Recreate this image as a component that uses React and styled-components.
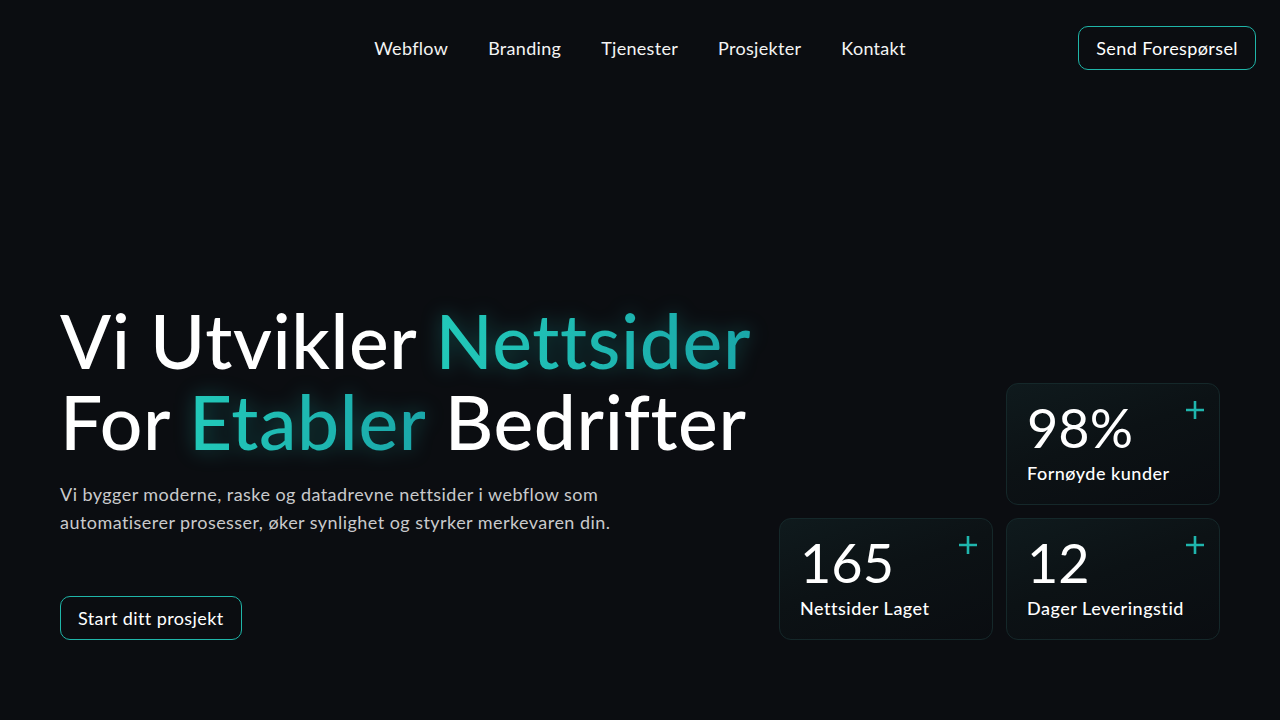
import React from "react";
import styled, { createGlobalStyle } from "styled-components";

const Global = createGlobalStyle`
  html, body { margin: 0; padding: 0; background: #0b0d11; }
  body { font-family: Lato, "Noto Sans", sans-serif; color: #fff; }
  * { box-sizing: border-box; }
`;

const Page = styled.div`
  width: 1280px;
  height: 720px;
  overflow: hidden;
  background: #0b0d11;
  display: flex;
  flex-direction: column;
`;

const Header = styled.header`
  height: 97px;
  padding: 26px 24px 0 24px;
  display: grid;
  grid-template-columns: 1fr auto 1fr;
  align-items: start;
`;

const Nav = styled.nav`
  display: flex;
  gap: 40px;
  height: 44px;
  align-items: center;
`;

const NavLink = styled.a`
  color: #f4f4f4;
  font-size: 18px;
  text-decoration: none;
  letter-spacing: 0.3px;
`;

const OutlineButton = styled.a`
  display: inline-flex;
  align-items: center;
  justify-content: center;
  height: ${(p) => p.$h || 44}px;
  padding: 0 ${(p) => p.$px || 17}px;
  border: 1px solid #1fb5a8;
  border-radius: 10px;
  color: #fff;
  font-size: 18px;
  letter-spacing: 0.4px;
  text-decoration: none;
  background: #0b0d11;
  justify-self: end;
`;

const Hero = styled.section`
  flex: 1;
  display: flex;
  justify-content: space-between;
  align-items: flex-end;
  padding: 0 60px 80px 60px;
`;

const Left = styled.div`
  display: flex;
  flex-direction: column;
  align-items: flex-start;
`;

const Title = styled.h1`
  margin: 0;
  font-size: 75px;
  font-weight: 500;
  line-height: 81px;
  letter-spacing: 0.6px;
  color: #fff;
`;

const Accent = styled.span`
  background: linear-gradient(90deg, #22c9b9 0%, #1aa7a9 100%);
  -webkit-background-clip: text;
  background-clip: text;
  color: transparent;
  filter: drop-shadow(0 0 10px rgba(30, 190, 180, 0.35));
`;

const Lead = styled.p`
  margin: 18px 0 0;
  font-size: 18px;
  line-height: 28px;
  letter-spacing: 0.45px;
  color: #c9cacc;
  max-width: 600px;
`;

const CtaWrap = styled.div`
  margin-top: 60px;
`;

const Stats = styled.div`
  display: grid;
  grid-template-columns: 214px 214px;
  grid-template-rows: 122px 122px;
  gap: 13px;
`;

const Card = styled.div`
  position: relative;
  grid-column: ${(p) => p.$col};
  grid-row: ${(p) => p.$row};
  border: 1px solid #15282a;
  border-radius: 12px;
  background: linear-gradient(160deg, #0f1a1d 0%, #0c1215 45%, #0a0d11 100%);
  padding: 12px 20px 0 20px;
  display: flex;
  flex-direction: column;
`;

const Num = styled.div`
  font-size: 54px;
  line-height: 64px;
  font-weight: 400;
  color: #fff;
`;

const Label = styled.div`
  font-size: 18px;
  font-weight: 500;
  letter-spacing: 0.5px;
  color: #fff;
  margin-top: 2px;
`;

const Plus = styled.svg`
  position: absolute;
  top: 16px;
  right: 14px;
  width: 20px;
  height: 20px;
`;

const PlusIcon = () => (
  <Plus viewBox="0 0 20 20">
    <path d="M10 1v18M1 10h18" stroke="#1fb5ad" strokeWidth="2.6" fill="none" />
  </Plus>
);

const stats = [
  { num: "98%", label: "Fornøyde kunder", col: 2, row: 1 },
  { num: "165", label: "Nettsider Laget", col: 1, row: 2 },
  { num: "12", label: "Dager Leveringstid", col: 2, row: 2 },
];

export default function App() {
  return (
    <Page>
      <Global />
      <Header>
        <div />
        <Nav>
          {["Webflow", "Branding", "Tjenester", "Prosjekter", "Kontakt"].map((n) => (
            <NavLink key={n} href="#">{n}</NavLink>
          ))}
        </Nav>
        <OutlineButton href="#">Send Forespørsel</OutlineButton>
      </Header>
      <Hero>
        <Left>
          <Title>
            Vi Utvikler <Accent>Nettsider</Accent>
            <br />
            For <Accent>Etabler</Accent> Bedrifter
          </Title>
          <Lead>
            Vi bygger moderne, raske og datadrevne nettsider i webflow som automatiserer prosesser, øker synlighet og styrker merkevaren din.
          </Lead>
          <CtaWrap>
            <OutlineButton href="#" $px={17}>Start ditt prosjekt</OutlineButton>
          </CtaWrap>
        </Left>
        <Stats>
          {stats.map((s) => (
            <Card key={s.num} $col={s.col} $row={s.row}>
              <Num>{s.num}</Num>
              <Label>{s.label}</Label>
              <PlusIcon />
            </Card>
          ))}
        </Stats>
      </Hero>
    </Page>
  );
}
